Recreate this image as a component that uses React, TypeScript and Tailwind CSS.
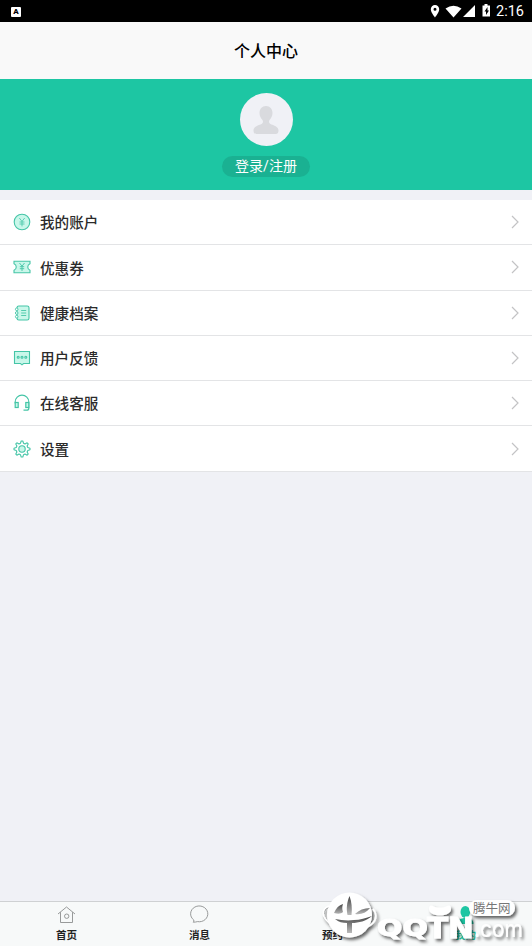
import type { ReactNode } from "react";

const G = "#45c5a7";
const FILL = "#c9f7ea";

const YenIcon = () => (
    <svg width="18" height="18" viewBox="0 0 18 18" fill="none" stroke={G} strokeWidth="1.1">
        <circle cx="9" cy="9" r="7.8" fill={FILL} />
        <path d="M6.3 5 9 8.4 11.7 5M9 8.4v5M6.5 9h5M6.5 11h5" strokeWidth="0.8" />
    </svg>
);

const CouponIcon = () => (
    <svg width="18" height="18" viewBox="0 0 18 18" fill="none" stroke={G} strokeWidth="1.1">
        <path d="M1 3.3h16v2.400c-3 1.300-3 5.300 0 6.600v2.400H1v-2.400c3-1.300 3-5.300 0-6.600z" fill={FILL} />
        <path d="M6.500 5 9 8.200 11.500 5M9 8.200v4.800M6.800 8.700h4.400M6.800 10.700h4.400" strokeWidth="0.9" />
    </svg>
);

const RecordIcon = () => (
    <svg width="18" height="18" viewBox="0 0 18 18" fill="none" stroke={G} strokeWidth="1.1">
        <rect x="4" y="2" width="12" height="14" rx="1.800" fill={FILL} />
        <path d="M8.200 6.500h5M8.200 9h5M8.200 11.500h5" strokeWidth="0.9" />
        <g fill="#fff" strokeWidth="0.9">
            <circle cx="3.700" cy="5.300" r="1.300" />
            <circle cx="3.700" cy="9" r="1.300" />
            <circle cx="3.700" cy="12.700" r="1.300" />
        </g>
    </svg>
);

const FeedbackIcon = () => (
    <svg width="18" height="18" viewBox="0 0 18 18" fill="none" stroke={G} strokeWidth="1.1">
        <path d="M1.500 2.500h15v12h-6L9 15.800l-1.500-1.300h-6z" fill={FILL} />
        <circle cx="5.200" cy="8.200" r="1" />
        <circle cx="9" cy="8.200" r="1" />
        <circle cx="12.800" cy="8.200" r="1" />
    </svg>
);

const ServiceIcon = () => (
    <svg width="18" height="18" viewBox="0 0 18 18" fill="none" stroke={G} strokeWidth="1.2">
        <path d="M2.200 9.500V8a6.800 6.800 0 0 1 13.600 0v6.200q0 2-2 2H10.500" />
        <rect x="2.200" y="8.500" width="3" height="5" fill={FILL} />
        <rect x="12.800" y="8.500" width="3" height="5" fill={FILL} />
    </svg>
);

const SettingsIcon = () => (
    <svg width="18" height="18" viewBox="0 0 18 18" fill="none" stroke={G} strokeWidth="1.1" strokeLinejoin="round">
        <path d="M7.500 3.200 8.200 1h1.600l.7 2.200 1.500.7 2.100-1.100 1.100 1.100L14.100 6l.7 1.500 2.200.7v1.600l-2.200.7-.7 1.500 1.100 2.100-1.100 1.100-2.100-1.100-1.500.7-.7 2.200H8.200l-.7-2.200-1.500-.7-2.100 1.100-1.100-1.100L3.900 12l-.7-1.500L1 9.800V8.200l2.200-.7L3.900 6 2.800 3.900l1.100-1.100L6 3.900z" />
        <circle cx="9" cy="9" r="3.200" fill={FILL} />
    </svg>
);

const Chevron = () => (
    <svg width="8" height="14" viewBox="0 0 8 14" fill="none" stroke="#c3c3c5" strokeWidth="1.200">
        <path d="m1 1 6 6-6 6" />
    </svg>
);

const menu: { label: string; icon: ReactNode }[] = [
    { label: "我的账户", icon: <YenIcon /> },
    { label: "优惠券", icon: <CouponIcon /> },
    { label: "健康档案", icon: <RecordIcon /> },
    { label: "用户反馈", icon: <FeedbackIcon /> },
    { label: "在线客服", icon: <ServiceIcon /> },
    { label: "设置", icon: <SettingsIcon /> },
];

const tabs: { label: string; active?: boolean; icon: ReactNode }[] = [
    {
        label: "首页",
        icon: (
            <>
                <path d="M1 9 9.500 2 18 9M3.500 7.200V17.500h12V7.200" />
                <circle cx="9.700" cy="11.200" r="2.200" />
            </>
        ),
    },
    { label: "消息", icon: <path d="M3.800 15A8.600 7.900 0 1 1 7.500 16.600q-2 .6-4.300.6 1-.8.600-2.200z" /> },
    { label: "预约", icon: <circle cx="9" cy="10" r="8.500" /> },
    {
        label: "我的",
        active: true,
        icon: (
            <g fill="#1dc6a3" stroke="none">
                <ellipse cx="9.300" cy="7" rx="4.800" ry="6" />
                <path d="M1.500 19c0-4 3-6 8-6s8 2 8 6z" />
            </g>
        ),
    },
];

const Watermark = () => (
    <svg className="absolute bottom-0 right-0" width="212" height="66" viewBox="0 0 212 66">
        <defs>
            <filter id="drop" x="-10%" y="-10%" width="125%" height="135%">
                <feDropShadow dx="2" dy="2.500" stdDeviation="1.800" floodColor="#000" floodOpacity="0.600" />
            </filter>
            <linearGradient id="petal" x1="0" y1="0" x2="0" y2="1">
                <stop offset="0" stopColor="#444" />
                <stop offset="1" stopColor="#bbb" />
            </linearGradient>
        </defs>
        <g filter="url(#drop)" fill="#fff">
            <path d="M9 26C1 29 1 38 11 44c12 7 28 8 38 2 7-4 9-11 4-17" fill="none" stroke="#fff" strokeWidth="1.500" />
            <ellipse cx="29.500" cy="35" rx="22.500" ry="22.500" />
            <text x="57" y="56" fontSize="23" fontWeight="700" textLength="51" lengthAdjust="spacingAndGlyphs" strokeWidth="0.800" stroke="#fff" className="font-['DejaVu_Sans',sans-serif]">QQ</text>
            <text x="107" y="57.500" fontSize="28" fontWeight="700" textLength="47" lengthAdjust="spacingAndGlyphs" strokeWidth="0.800" stroke="#fff" className="font-['DejaVu_Sans',sans-serif]">TN</text>
            <text x="154" y="57" fontSize="24" textLength="49" lengthAdjust="spacingAndGlyphs" className="font-['Inter',sans-serif]">.com</text>
            {/* horns over the T */}
            <path d="M109 29c0-4 2-4 4-3 3 2 11 2 14 0 2-1 4-1 4 3 0 4-5 6.500-11 6.500s-11-2.500-11-6.500" />
            <rect x="149" y="20" width="46" height="16" rx="8" />
        </g>
        <g fill="url(#petal)">
            <path d="M29.500 16c-2.500 6-3.500 12-2 19h4c.8-7 .2-13-2-19" />
            <path d="M23 24c-4 1-7 4-9 9 4 1 7 1 9-1-1-3-1-5 0-8M50 28c-6 0-11 2-15 6 6 1 11-1 15-6" />
            <path d="M15 39c4 3 7 4 12 4v10h5V43c7 0 14-2 20-7-6 2-12 4-18 4-7 1-13 0-19-1" />
        </g>
        <text x="153" y="32.500" fontSize="12.500" fill="#777">腾牛网</text>
    </svg>
);

export default function App() {
    return (
        <main className="relative flex h-[946px] w-[532px] flex-col overflow-hidden bg-[#f0f1f6] font-['Roboto','Noto_Sans_CJK_SC',sans-serif] text-[#222]">
            {/* Status bar */}
            <div className="flex h-[22px] shrink-0 items-center justify-between bg-black pl-[11px] pr-2 text-white">
                <div className="mt-px flex size-[10px] items-center justify-center rounded-[1px] bg-white text-[8px] font-black text-black">A</div>
                <div className="flex items-center">
                    <svg width="64" height="16" viewBox="0 0 64 16" fill="#fff">
                        <path fillRule="evenodd" d="M7 2a4.200 4.200 0 0 0-4.200 4.300C2.800 9.500 7 14.500 7 14.500s4.200-5 4.200-8.200A4.200 4.200 0 0 0 7 2m0 2.700a1.500 1.500 0 1 1 0 3 1.500 1.500 0 0 1 0-3" />
                        <path d="M17.500 5.500q8-5.500 16 0l-8 9zM47 2v12H35z" />
                        <path fillRule="evenodd" d="M54.500 2.500H56.500V1h3v1.500h2.500V13.500h-7.500zM59.500 4l-3 4.500h1.500v3.500l3-4.500h-1.500z" />
                    </svg>
                    <span className="ml-[4px] mt-[2px] text-[14.500px] leading-[20px]">2:16</span>
                </div>
            </div>

            <header className="flex h-[57px] shrink-0 items-center justify-center bg-[#f9f9f9] pt-[2px] text-[16px] font-medium text-black">个人中心</header>

            {/* Profile */}
            <section className="flex h-[111px] shrink-0 flex-col items-center bg-[#1dc6a3] pt-[14px]">
                <div className="flex size-[53px] items-center justify-center rounded-full bg-[#f0f1f6]">
                    <svg width="26" height="28" viewBox="0 0 26 28" fill="#d9dade">
                        <path d="M13 0c-4 0-6.500 3-6.500 7 0 3 1.500 5.500 3 7 1 2 .5 3.500-2 4.500C3 20 .5 21.500.5 24.500c0 2.500 1 3.500 3 3.500h19c2 0 3-1 3-3.500 0-3-2.500-4.500-7-6-2.500-1-3-2.500-2-4.500 1.500-1.500 3-4 3-7 0-4-2.500-7-6.500-7" />
                    </svg>
                </div>
                <button className="mt-[10px] flex h-[21px] w-[88px] items-center justify-center rounded-full bg-[#1ab192] text-[14px] text-white">登录/注册</button>
            </section>

            <nav className="mt-[10px] shrink-0 bg-white">
                {menu.map((item) => (
                    <div key={item.label} className="flex h-[45.300px] items-center border-b border-[#e3e4e6] pl-[13px] pr-[13px]">
                        {item.icon}
                        <span className="ml-[9px] flex-1 pt-[4px] text-[14.600px] font-medium text-[#2b2b2b]">{item.label}</span>
                        <Chevron />
                    </div>
                ))}
            </nav>

            {/* Tab bar */}
            <footer className="mt-auto grid h-[45px] shrink-0 grid-cols-4 border-t border-[#cfd1d3] bg-[#f7f9f9]">
                {tabs.map((tab) => (
                    <div key={tab.label} className="flex flex-col items-center pt-[3px]">
                        <svg width="20" height="20" viewBox="0 0 20 20" fill="none" stroke="#8c8f8f" strokeWidth="0.9">
                            {tab.icon}
                        </svg>
                        <span className={`mt-[3px] text-[10.500px] font-bold leading-[15px] ${tab.active ? "text-[#1dc6a3]" : "text-[#222]"}`}>{tab.label}</span>
                    </div>
                ))}
            </footer>

            <Watermark />
        </main>
    );
}
